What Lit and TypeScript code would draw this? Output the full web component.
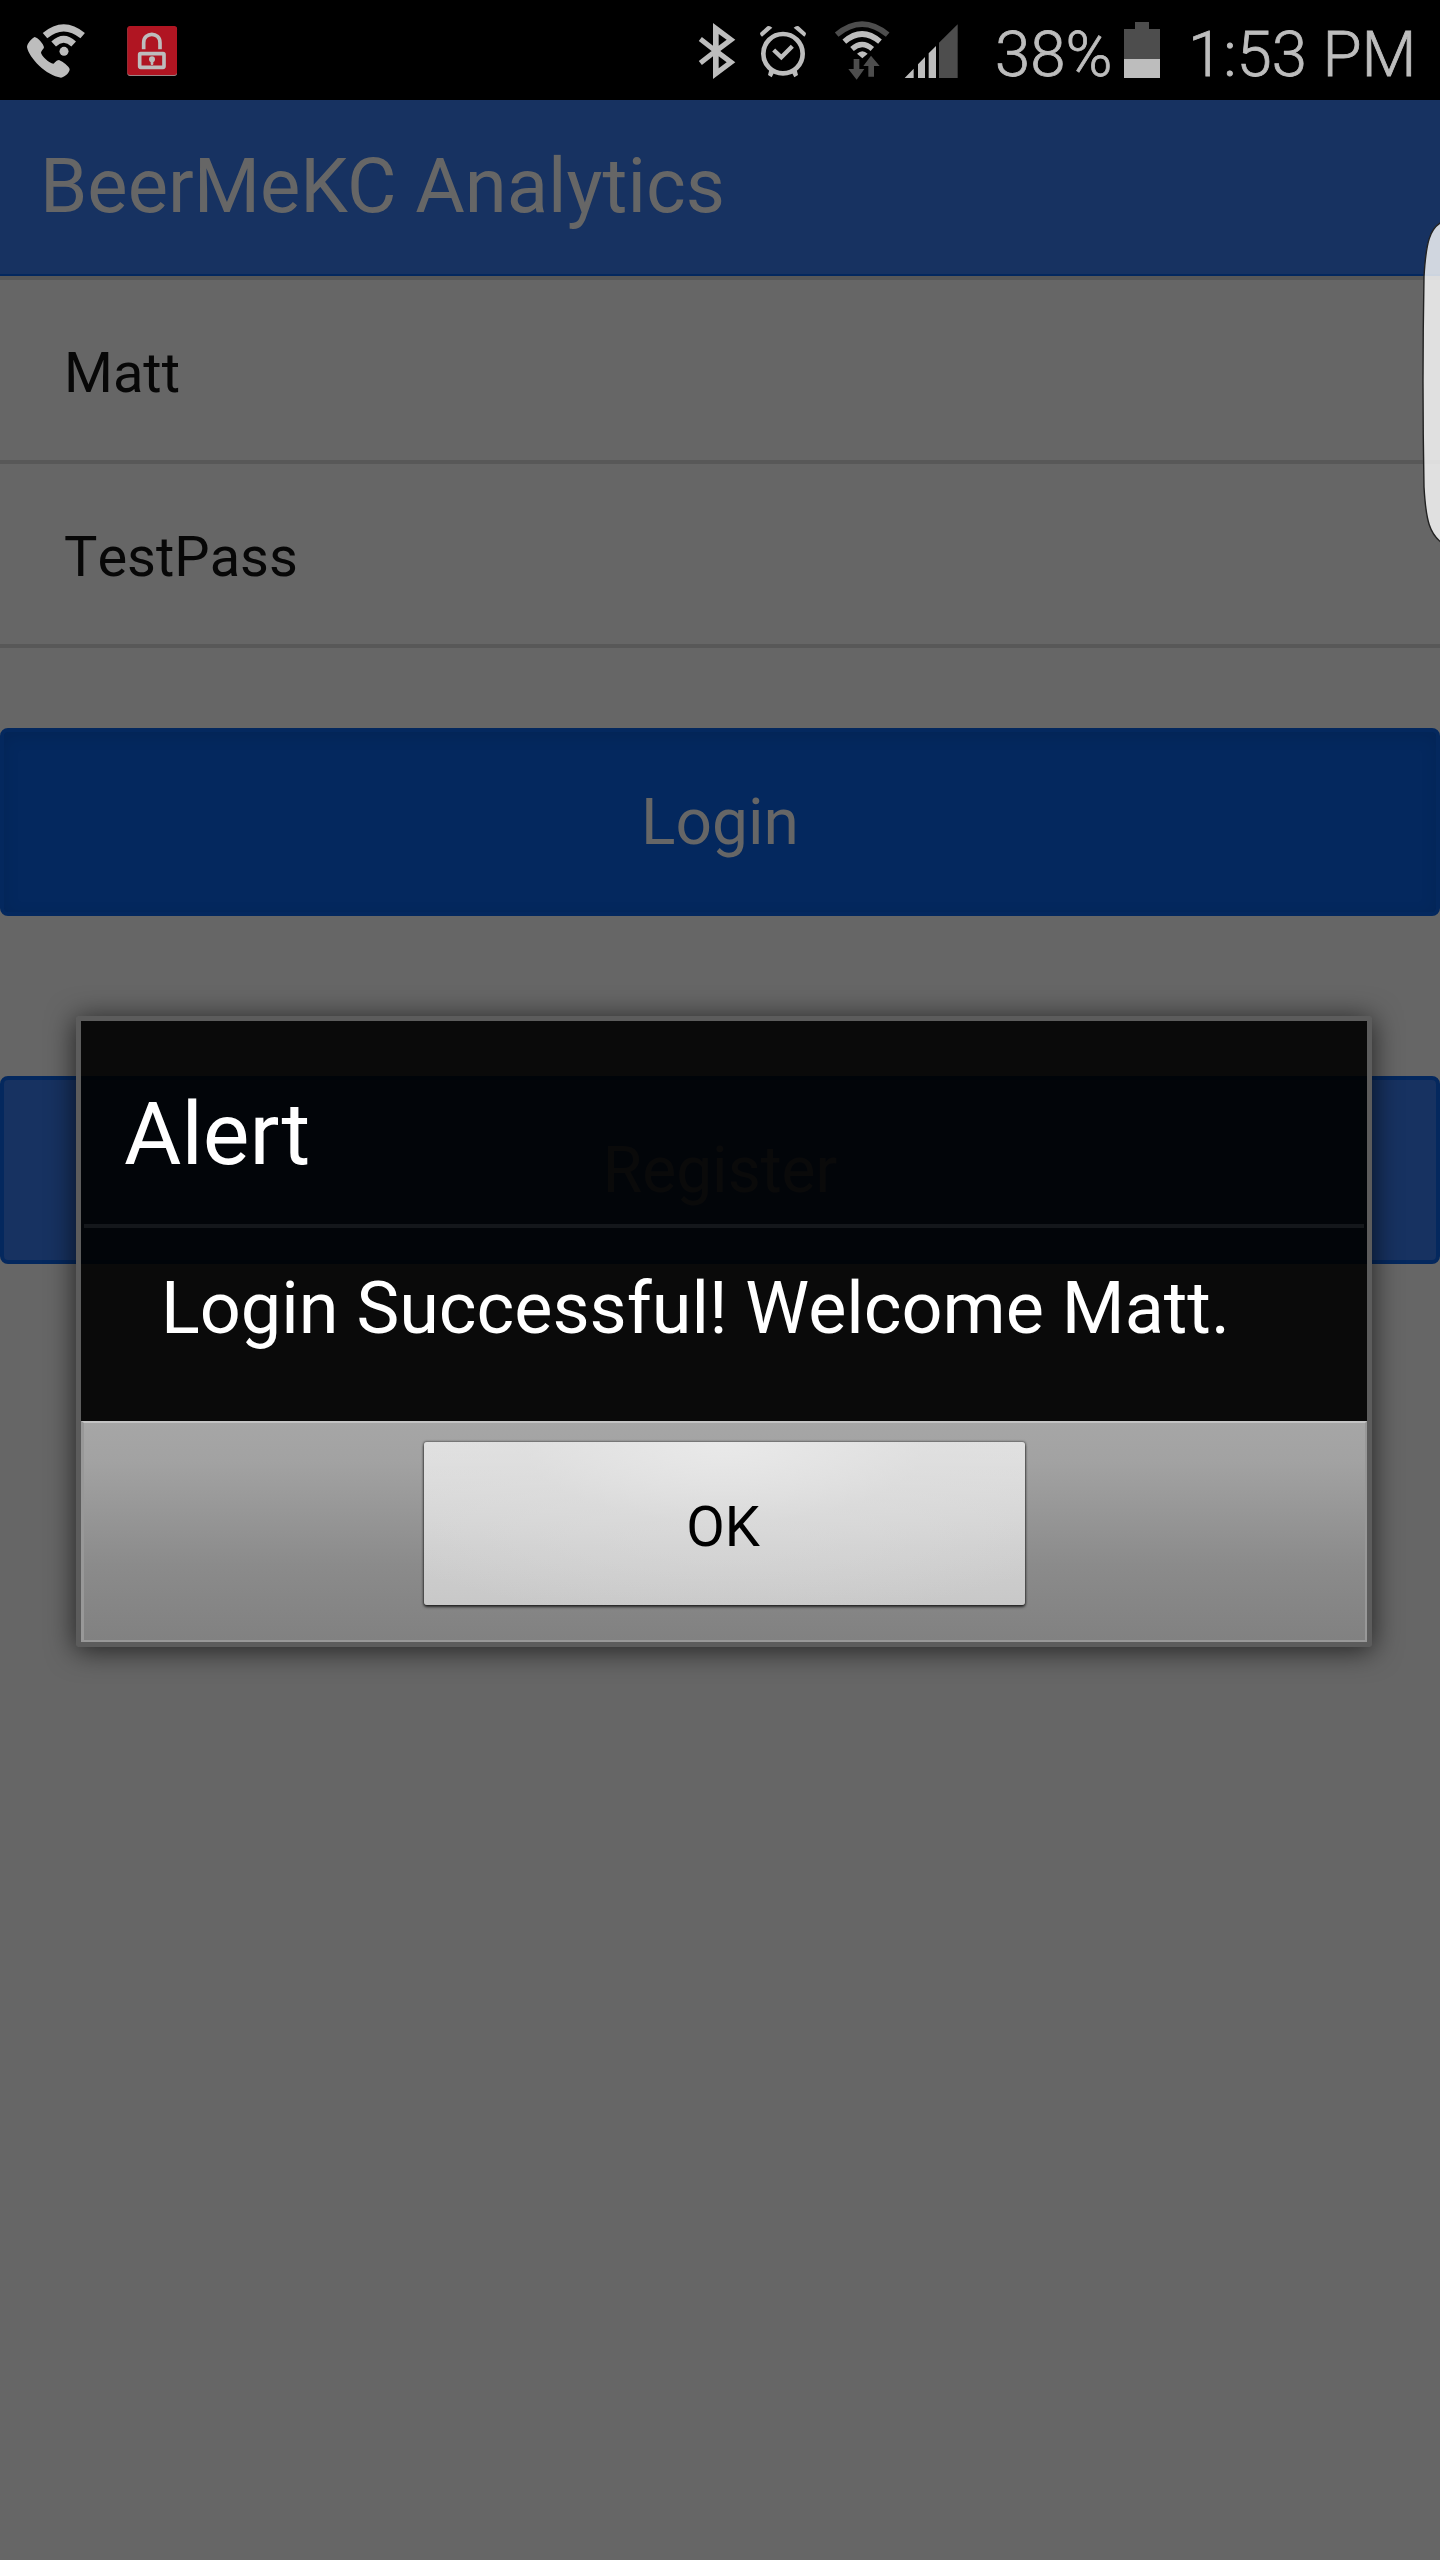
import { LitElement, html, css } from "lit";
import { customElement, property } from "lit/decorators.js";

@customElement("status-bar")
class StatusBar extends LitElement {
  static styles = css`
    :host {
      display: flex;
      height: 100px;
      background: #000;
      color: #bdbdbd;
      font: 300 63.5px/110px Roboto, "Noto Sans", sans-serif;
      -webkit-text-stroke: 0.8px #bdbdbd;
    }
    svg { display: block; height: 100px; flex: none; fill: #bdbdbd; }
    .call { width: 60px; margin-left: 26px; }
    .lock { width: 52px; margin-left: 40px; }
    .bluetooth { width: 38px; margin-left: 520px; }
    .alarm { width: 48px; margin-left: 23px; }
    .wifi { width: 56px; margin-left: 27px; }
    .signal { width: 54px; margin-left: 14px; }
    .battery { width: 36px; }
    .percent { width: 129px; margin-left: 37px; white-space: nowrap; }
    .time { margin-left: 28px; white-space: nowrap; }
    .dim { fill: #4d4d4d; }
    .line { fill: none; stroke: #bdbdbd; }
    .dimline { fill: none; stroke: #4d4d4d; }
    .red { fill: #b01522; }
  `;

  render() {
    return html`
      <svg class="call" viewBox="78 0 180 300">
        <path d="M104 111 C94 116 82 130 81 141 C87 174 139 227 183 233 C195 231 209 218 209 208 C208 199 187 184 177 180 C169 180 164 190 160 191 C148 190 124 167 123 158 C123 152 132 147 132 142 C131 132 113 112 104 111Z" />
        <path class="line" stroke-width="21" d="M135 107 Q191 60 248 107" />
        <path class="line" stroke-width="20" d="M161 132 Q191 103 221 132" />
        <circle cx="192" cy="154" r="13.5" />
      </svg>
      <svg class="lock" viewBox="378 0 156 300">
        <rect x="382" y="80" width="149" height="148" rx="8" fill="#9b8587" />
        <rect class="red" x="382" y="78" width="149" height="147" rx="8" />
        <path class="line" stroke-width="11" d="M431 148 V128 C431 95 480 95 480 128 V148" />
        <rect class="line" stroke-width="11" x="419" y="161" width="73" height="41" rx="3" />
        <circle cx="456" cy="178" r="9" />
        <rect x="452" y="178" width="8" height="17" rx="3" />
      </svg>
      <svg class="bluetooth" viewBox="54 0 114 300">
        <path class="line" stroke-width="15" d="M61 117 L107 153 L61 189" />
        <path fill-rule="evenodd" d="M99 69 L166 119 L121 153 L166 187 L99 237Z M116 102 V137 L140 119Z M116 169 V205 L140 187Z" />
      </svg>
      <svg class="alarm" viewBox="237 0 144 300">
        <circle class="line" stroke-width="14" cx="309" cy="161" r="59" />
        <path class="line" stroke-width="13" d="M281 150 L304 172 L337 139" />
        <path d="M240 99 L262 79 Q269 76 277 83 L246 110 Q240 108 240 99Z M378 99 L356 79 Q349 76 341 83 L373 110 Q378 108 378 99Z" />
        <path d="M268 209 L283 217 L275 232 L264 225Z M350 209 L335 217 L343 232 L354 225Z" />
      </svg>
      <svg class="wifi" viewBox="462 0 168 300">
        <path class="dimline" stroke-width="17" d="M470 104 Q546 41 623 104" />
        <path class="line" stroke-width="17" d="M493 125 Q546 79 600 125" />
        <path class="line" stroke-width="16" d="M516 147 Q546 120 577 147" />
        <path d="M531 161 Q547 146 563 161 L547 175Z" />
        <path class="dim" d="M521 177 H538 V207 H553 L530 239 L505 207 H521Z M573 167 L599 198 H582 V230 H565 V198 H550Z" />
      </svg>
      <svg class="signal" viewBox="672 0 162 300">
        <path d="M674 234 L701 206 V234Z M714 193 L735 171 V234 H714Z M746 160 L768 138 V234 H746Z" />
        <path class="dim" d="M777 128 L833 73 V234 H777Z" />
      </svg>
      <span class="percent">38%</span>
      <svg class="battery" viewBox="432 0 108 300">
        <path class="dim" d="M465 66 H507 V87 H540 V177 H432 V87 H465Z" />
        <rect x="432" y="177" width="108" height="57" />
      </svg>
      <span class="time">1:53 PM</span>
    `;
  }
}

@customElement("alert-dialog")
class AlertDialog extends LitElement {
  @property() heading = "";
  @property() message = "";

  static styles = css`
    :host {
      display: flex;
      flex-direction: column;
      box-sizing: border-box;
      width: 1296px;
      height: 631px;
      border: 5px solid #5c5c5c;
      border-radius: 4px;
      box-shadow: 0 3px 28px 1px rgba(0, 0, 0, 0.65);
      color: #fff;
      font-family: Roboto, "Noto Sans", sans-serif;
    }
    .panel {
      display: flex;
      flex-direction: column;
      height: 400px;
      padding: 0 3px;
      background: rgba(0, 0, 0, 0.9);
    }
    .heading {
      height: 203px;
      padding-left: 40px;
      box-sizing: border-box;
      font-size: 88px;
      line-height: 226px;
    }
    .rule { height: 4px; background: rgba(255, 255, 255, 0.075); }
    .message {
      padding-left: 77px;
      font-size: 72px;
      line-height: 162px;
      white-space: nowrap;
    }
    .actions {
      display: flex;
      justify-content: center;
      box-sizing: border-box;
      height: 221px;
      padding-top: 19px;
      border: 2px solid #989898;
      border-left-width: 3px;
      border-top-color: #c4c4c4;
      background: linear-gradient(#a6a6a6, #a2a2a2 18%, #8b8b8b 65%, #818181) padding-box;
    }
    .ok {
      width: 601px;
      height: 163px;
      padding: 6px 3px 0 0;
      border: 0;
      border-radius: 3px;
      background: radial-gradient(ellipse 75% 110% at 50% 0, #e9e9e9, rgba(222, 222, 222, 0.55) 45%, rgba(201, 201, 201, 0) 100%),
        linear-gradient(#e2e2e2, #cfcfcf 65%, #c8c8c8);
      box-shadow: 0 0 2px 1px rgba(0, 0, 0, 0.35), 0 2px 3px rgba(0, 0, 0, 0.65);
      color: #000;
      font: 400 56px/1 Roboto, "Noto Sans", sans-serif;
    }
  `;

  render() {
    return html`
      <div class="panel">
        <div class="heading">${this.heading}</div>
        <div class="rule"></div>
        <div class="message">${this.message}</div>
      </div>
      <div class="actions"><button class="ok">OK</button></div>
    `;
  }
}

@customElement("app-root")
class AppRoot extends LitElement {
  static styles = css`
    :host {
      display: block;
      position: relative;
      width: 1440px;
      height: 2560px;
      overflow: hidden;
      background: #666;
      font-family: Roboto, "Noto Sans", sans-serif;
    }
    .header {
      box-sizing: border-box;
      height: 176px;
      padding-left: 40px;
      border-bottom: 2px solid #04285e;
      background: #173261;
      color: #666;
      font-size: 76px;
      line-height: 172px;
    }
    .fields { display: flex; flex-direction: column; border-top: 4px solid #585858; }
    .field {
      height: 180px;
      padding-left: 64px;
      border-bottom: 4px solid #585858;
      color: #070707;
      font-size: 56px;
      line-height: 186px;
      font-kerning: none;
    }
    .buttons { display: flex; flex-direction: column; gap: 160px; padding-top: 80px; }
    .button {
      box-sizing: border-box;
      height: 188px;
      padding: 1px 0 0;
      border: 4px solid #04285e;
      border-radius: 8px;
      background: #173261;
      color: #666;
      font: 400 64px/180px Roboto, "Noto Sans", sans-serif;
    }
    .pressed {
      background: #04285e;
      box-shadow: inset 0 4px 16px rgba(0, 0, 0, 0.1);
    }
    .dialog { position: absolute; left: 76px; top: 1016px; }
    .edge { position: absolute; right: 0; top: 215px; width: 20px; height: 335px; }
  `;

  render() {
    return html`
      <status-bar></status-bar>
      <div class="header">BeerMeKC Analytics</div>
      <div class="fields">
        <div class="field">Matt</div>
        <div class="field">TestPass</div>
      </div>
      <div class="buttons">
        <button class="button pressed">Login</button>
        <button class="button">Register</button>
      </div>
      <alert-dialog
        class="dialog"
        heading="Alert"
        message="Login Successful! Welcome Matt."
      ></alert-dialog>
      <svg class="edge" viewBox="0 0 20 335">
        <path
          d="M22 7 C10 13 6 27 4 62 Q2 167 4 272 C6 307 10 319 22 328Z"
          fill="#fff" fill-opacity="0.8" stroke="#222" stroke-width="1.4"
        />
      </svg>
    `;
  }
}
